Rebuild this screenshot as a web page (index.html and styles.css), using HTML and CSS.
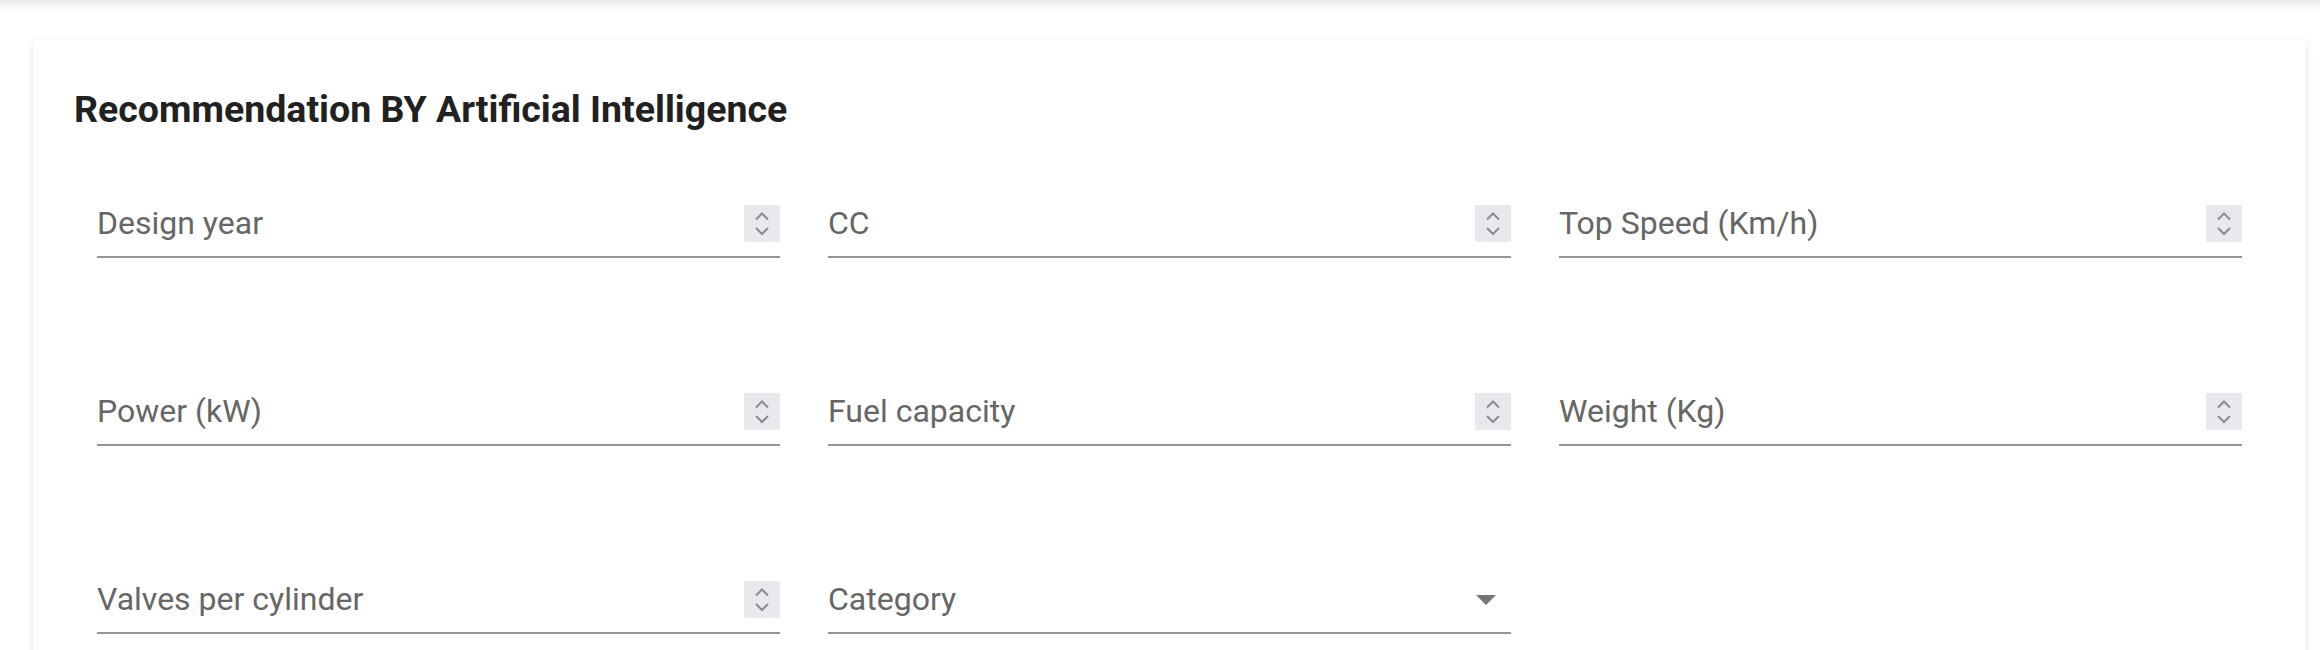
FILE: index.html
```html
<!DOCTYPE html>
<html lang="en">
<head>
<meta charset="utf-8">
<title>Recommendation BY Artificial Intelligence</title>
<link rel="stylesheet" href="styles.css">
</head>
<body>
<div class="topbar-shadow"></div>
<main class="page">
  <section class="card">
    <h2 class="card-title">Recommendation BY Artificial Intelligence</h2>
    <form class="fields">
      <div class="field">
        <span class="label">Design year</span>
        <span class="spinner"><svg viewBox="0 0 36 37" width="36" height="37"><path d="M12 14.5 L18 8.5 L24 14.5 M12 23 L18 29 L24 23" fill="none" stroke="#8a8a93" stroke-width="2"/></svg></span>
      </div>
      <div class="field">
        <span class="label">CC</span>
        <span class="spinner"><svg viewBox="0 0 36 37" width="36" height="37"><path d="M12 14.5 L18 8.5 L24 14.5 M12 23 L18 29 L24 23" fill="none" stroke="#8a8a93" stroke-width="2"/></svg></span>
      </div>
      <div class="field">
        <span class="label">Top Speed (Km/h)</span>
        <span class="spinner"><svg viewBox="0 0 36 37" width="36" height="37"><path d="M12 14.5 L18 8.5 L24 14.5 M12 23 L18 29 L24 23" fill="none" stroke="#8a8a93" stroke-width="2"/></svg></span>
      </div>
      <div class="field">
        <span class="label">Power (kW)</span>
        <span class="spinner"><svg viewBox="0 0 36 37" width="36" height="37"><path d="M12 14.5 L18 8.5 L24 14.5 M12 23 L18 29 L24 23" fill="none" stroke="#8a8a93" stroke-width="2"/></svg></span>
      </div>
      <div class="field">
        <span class="label">Fuel capacity</span>
        <span class="spinner"><svg viewBox="0 0 36 37" width="36" height="37"><path d="M12 14.5 L18 8.5 L24 14.5 M12 23 L18 29 L24 23" fill="none" stroke="#8a8a93" stroke-width="2"/></svg></span>
      </div>
      <div class="field">
        <span class="label">Weight (Kg)</span>
        <span class="spinner"><svg viewBox="0 0 36 37" width="36" height="37"><path d="M12 14.5 L18 8.5 L24 14.5 M12 23 L18 29 L24 23" fill="none" stroke="#8a8a93" stroke-width="2"/></svg></span>
      </div>
      <div class="field">
        <span class="label">Valves per cylinder</span>
        <span class="spinner"><svg viewBox="0 0 36 37" width="36" height="37"><path d="M12 14.5 L18 8.5 L24 14.5 M12 23 L18 29 L24 23" fill="none" stroke="#8a8a93" stroke-width="2"/></svg></span>
      </div>
      <div class="field">
        <span class="label">Category</span>
        <span class="select-arrow"><svg viewBox="0 0 20 10" width="20" height="10"><path d="M0 0 L20 0 L10 10 Z" fill="#757575"/></svg></span>
      </div>
    </form>
  </section>
</main>
</body>
</html>
```

FILE: styles.css
```css
html, body {
  margin: 0;
  padding: 0;
  background: #ffffff;
  font-family: Roboto, "Liberation Sans", Arial, sans-serif;
  overflow: hidden;
}

.topbar-shadow {
  height: 14px;
  background: linear-gradient(to bottom, rgba(0, 0, 0, 0.09), rgba(0, 0, 0, 0.02) 60%, rgba(0, 0, 0, 0));
}

.page {
  padding: 26px 14px 0 33px;
}

.card {
  background: #fff;
  border-radius: 5px;
  box-shadow: 0 2px 10px rgba(0, 0, 0, 0.09), 0 1px 3px rgba(0, 0, 0, 0.06);
  padding: 49px 41px 60px 41px;
  min-height: 700px;
}

.card-title {
  margin: 0 0 74px 0;
  font-size: 37.5px;
  line-height: 40px;
  font-weight: 700;
  color: #212121;
}

.fields {
  display: grid;
  grid-template-columns: repeat(3, 1fr);
  column-gap: 48px;
  row-gap: 133px;
  padding: 0 23px;
}

.field {
  display: flex;
  align-items: center;
  justify-content: space-between;
  height: 40px;
  padding-bottom: 13px;
  border-bottom: 2px solid #949494;
}

.label {
  font-size: 32px;
  line-height: 40px;
  color: #666666;
  white-space: nowrap;
}

.spinner {
  display: flex;
  width: 36px;
  height: 37px;
  background: #e9e9ed;
}

.select-arrow {
  display: flex;
  margin-right: 15px;
  margin-top: 2px;
}
```
